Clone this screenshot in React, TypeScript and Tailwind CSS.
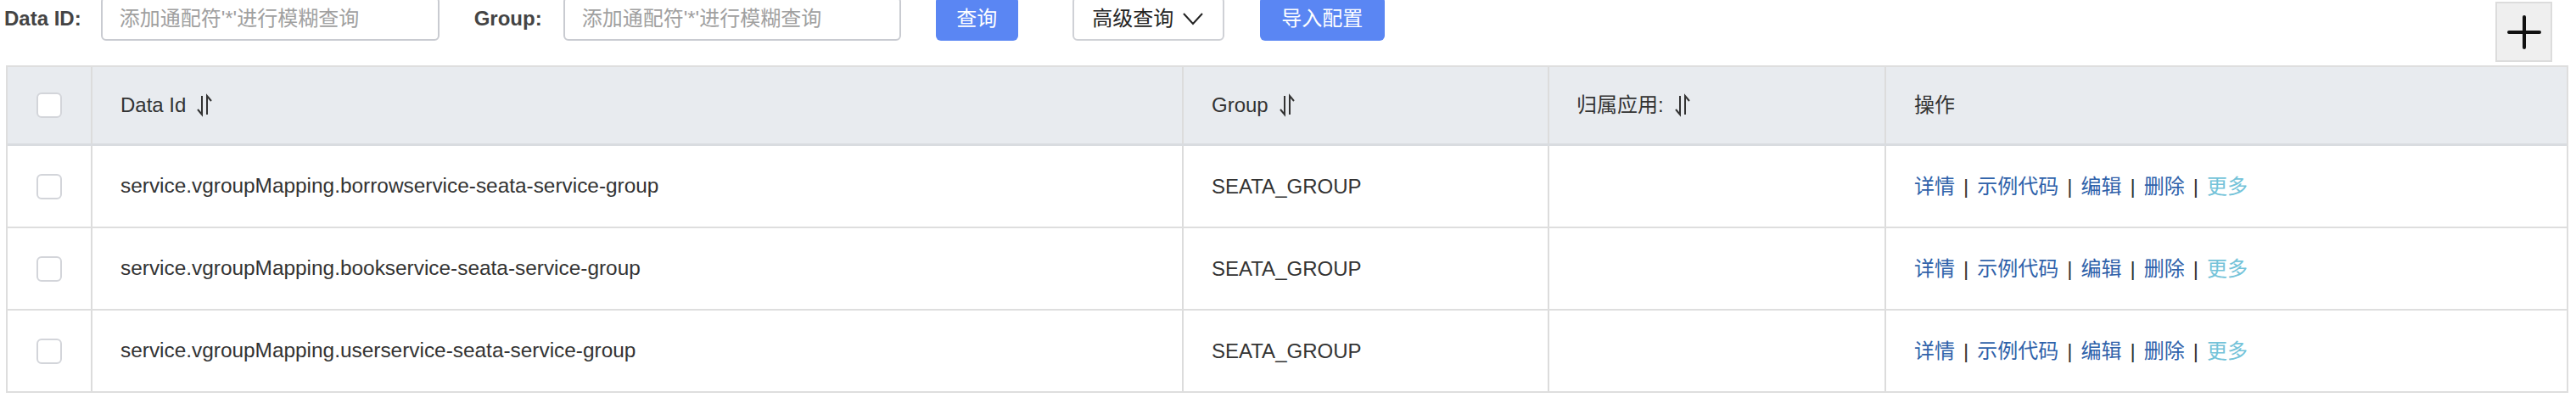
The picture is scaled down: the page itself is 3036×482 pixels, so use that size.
import { useState } from "react";

const rows = [
    "service.vgroupMapping.borrowservice-seata-service-group",
    "service.vgroupMapping.bookservice-seata-service-group",
    "service.vgroupMapping.userservice-seata-service-group",
];

const font = { fontFamily: "'Liberation Sans', 'Noto Sans CJK SC', sans-serif" };

function SortIcon() {
    return (
        <svg width="20" height="30" viewBox="0 0 20 30" className="ml-[12px] inline-block" fill="none" stroke="#333" strokeWidth="2">
            <path d="M7 4 L7 26 L2 20" />
            <path d="M13 26 L13 4 L18 10" />
        </svg>
    );
}

function Checkbox() {
    const [checked, setChecked] = useState(false);
    return (
        <button
            onClick={() => setChecked(!checked)}
            className={`w-[30px] h-[30px] rounded-[6px] border-2 border-[#d3d5da] ${checked ? "bg-[#5a86f3]" : "bg-white"}`}
        />
    );
}

const cols = "grid grid-cols-[100px_1286px_431px_397px_1fr]";

export default function App() {
    return (
        <div className="w-[3036px] h-[482px] bg-white overflow-hidden text-[24px] text-[#333]" style={font}>
            <div className="flex flex-row items-start">
                <div className="flex flex-row items-center h-[52px] -mt-[4px]">
                    <span className="ml-[5px] font-bold text-[#444]">Data ID:</span>
                    <div className="ml-[23px] w-[399px] h-[52px] border-2 border-[#c9cbd1] rounded-[6px] flex items-center pl-[20px] text-[#a0a0a0]">
                        添加通配符'*'进行模糊查询
                    </div>
                    <span className="ml-[41px] font-bold text-[#444]">Group:</span>
                    <div className="ml-[25px] w-[398px] h-[52px] border-2 border-[#c9cbd1] rounded-[6px] flex items-center pl-[20px] text-[#a0a0a0]">
                        添加通配符'*'进行模糊查询
                    </div>
                    <button className="ml-[41px] w-[97px] h-[52px] rounded-[6px] bg-[#5a86f3] text-white">查询</button>
                    <button className="ml-[64px] w-[179px] h-[52px] rounded-[6px] bg-white border-2 border-[#cfd1d6] flex items-center justify-center text-[#222]">
                        高级查询
                        <svg width="26" height="16" viewBox="0 0 26 16" className="ml-[10px]" fill="none" stroke="#222" strokeWidth="2">
                            <path d="M2 2 L13 14 L24 2" />
                        </svg>
                    </button>
                    <button className="ml-[42px] w-[147px] h-[52px] rounded-[6px] bg-[#5a86f3] text-white">导入配置</button>
                </div>
                <button className="ml-auto mr-[28px] mt-[2px] w-[67px] h-[71px] bg-[#efefef] border-2 border-[#dcdcdc] flex items-center justify-center">
                    <svg width="42" height="42" viewBox="0 0 42 42" stroke="#111" strokeWidth="4" strokeLinecap="round">
                        <path d="M21 3 L21 39 M3 21 L39 21" />
                    </svg>
                </button>
            </div>

            <div className="mt-[4px] ml-[7px] w-[3020px] border-2 border-b-0 border-[#dedede]">
                <div className={`${cols} h-[93px] bg-[#e8ebef] border-b-[3px] border-[#d9dce0]`}>
                    <div className="flex items-center justify-center border-r-2 border-[#dcdcdc]">
                        <Checkbox />
                    </div>
                    <div className="flex items-center px-[33px] border-r-2 border-[#dcdcdc]">
                        Data Id<SortIcon />
                    </div>
                    <div className="flex items-center px-[33px] border-r-2 border-[#dcdcdc]">
                        Group<SortIcon />
                    </div>
                    <div className="flex items-center px-[32px] border-r-2 border-[#dcdcdc]">
                        归属应用:<SortIcon />
                    </div>
                    <div className="flex items-center px-[33px]">操作</div>
                </div>
                {rows.map(r => (
                    <div key={r} className={`${cols} h-[97px] border-b-2 border-[#dedede]`}>
                        <div className="flex items-center justify-center border-r-2 border-[#dcdcdc]">
                            <Checkbox />
                        </div>
                        <div className="flex items-center px-[33px] border-r-2 border-[#dcdcdc] text-[24.4px]">{r}</div>
                        <div className="flex items-center px-[33px] border-r-2 border-[#dcdcdc]">SEATA_GROUP</div>
                        <div className="border-r-2 border-[#dcdcdc]" />
                        <div className="flex items-center px-[33px]">
                            <a className="text-[#2f62aa] cursor-pointer">详情</a>
                            <span className="mx-[10px]">|</span>
                            <a className="text-[#2f62aa] cursor-pointer">示例代码</a>
                            <span className="mx-[10px]">|</span>
                            <a className="text-[#2f62aa] cursor-pointer">编辑</a>
                            <span className="mx-[10px]">|</span>
                            <a className="text-[#2f62aa] cursor-pointer">删除</a>
                            <span className="mx-[10px]">|</span>
                            <a className="text-[#74c3d9] cursor-pointer">更多</a>
                        </div>
                    </div>
                ))}
            </div>
        </div>
    );
}
